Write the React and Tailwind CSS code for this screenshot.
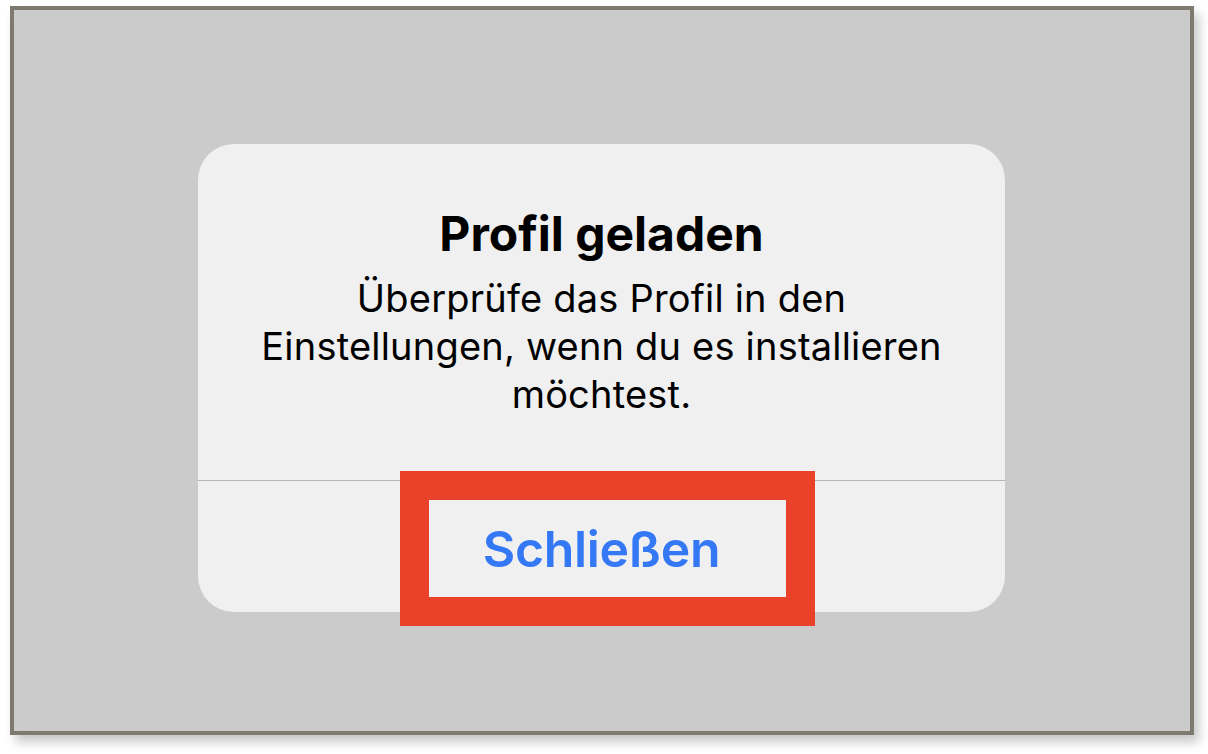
import React from 'react';

export default function App() {
  return (
    <div className="w-[1208px] h-[754px] bg-white overflow-hidden" style={{ fontFamily: 'Inter, "Noto Sans", sans-serif' }}>
      {/* Rahmen */}
      <div className="ml-[10px] mt-[6px] w-[1184px] h-[729px] border-4 border-[#7e7a70] bg-[#cbcbcb] shadow-[5px_7px_10px_rgba(0,0,0,0.22)] pt-[134px] pl-[184px]">
        {/* Dialog */}
        <div className="relative w-[807px] h-[468px] rounded-[36px] bg-[#f0f0f0] flex flex-col">
          <div className="h-[336px] flex flex-col items-center text-black">
            <h2 className="mt-[62px] text-[48px] leading-[56px] font-bold">Profil geladen</h2>
            <p className="mt-[12px] text-[38px] leading-[48px] text-center tracking-[0.2px]">
              Überprüfe das Profil in den
              <br />
              Einstellungen, wenn du es installieren
              <br />
              möchtest.
            </p>
          </div>
          <div className="h-px bg-[#b5b5b5]" />
          <div className="flex-1 flex justify-center pt-[38px]">
            <span className="text-[50px] leading-[60px] font-semibold text-[#3478f6] tracking-[-0.3px]">Schließen</span>
          </div>

          {/* Markierung */}
          <div className="absolute left-[202px] top-[327px] w-[415px] h-[155px] border-[29px] border-[#e9412a]" />
        </div>
      </div>
    </div>
  );
}
